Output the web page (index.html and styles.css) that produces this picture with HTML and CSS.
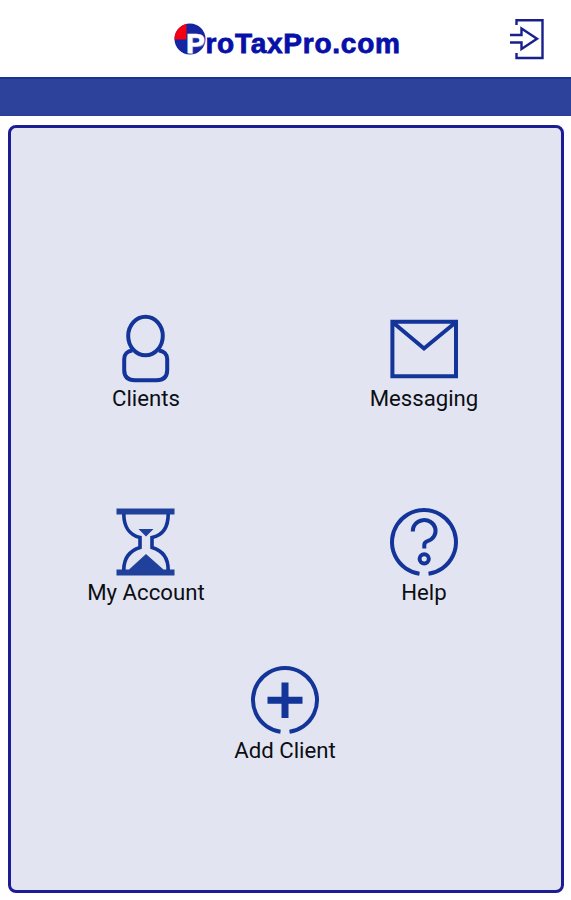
FILE: index.html
```html
<!DOCTYPE html>
<html lang="en">
<head>
<meta charset="utf-8">
<title>ProTaxPro.com</title>
<link rel="stylesheet" href="styles.css">
</head>
<body>
<header class="header">
  <div class="logo">
    <svg class="logo-mark" viewBox="0 0 32 32"><circle cx="16" cy="16" r="15.5" fill="#1524a0"/><path d="M12.5 16.5H.5A15.5 15.5 0 0 1 12.5 .9Z" fill="#f40012"/></svg>
    <span class="logo-text"><span class="logo-initial">P</span>roTaxPro.com</span>
  </div>
  <a class="exit" aria-label="Log out"><svg viewBox="0 0 36 42"><path d="M7.5 7V2.2H33.5V40H7.5V35" /><path d="M1 17H12.5V10.5L28 20.7L12.5 31V24.5H1"/></svg></a>
</header>
<div class="bar"></div>
<main class="panel">
  <a class="item">
    <svg class="icon" viewBox="0 0 72 72"><ellipse cx="35.5" cy="24" rx="17.3" ry="19.2"/><path d="M22.3 38.5C17.5 39 14.2 42.5 14.2 47V58C14.2 65 18 68.2 25 68.2H46.5C53.5 68.2 57.2 65 57.2 58V47C57.2 42.5 54 39 48.7 38.5"/></svg>
    <span class="label">Clients</span>
  </a>
  <a class="item">
    <svg class="icon" viewBox="0 0 72 72"><path d="M4.4 9.8H68V64.2H4.4Z M5 10.5L36 36.5L67.5 10.5"/></svg>
    <span class="label">Messaging</span>
  </a>
  <a class="item">
    <svg class="icon hourglass" viewBox="0 0 72 72"><path class="solid" d="M6.5 2.5H64.5V8.5H6.5ZM6.5 63.5H64.5V69.5H6.5ZM28.5 23H43.5L36 30.5ZM18.5 64L36 48L54 64Z"/><path d="M13.8 8C13.8 20 19 29 30 31.5V41.5C19 45 13.8 53 13.8 64M58.2 8C58.2 20 54 29 42 31.5V41.5C54 45 58.2 53 58.2 64"/></svg>
    <span class="label">My Account</span>
  </a>
  <a class="item">
    <svg class="icon" viewBox="0 0 72 72"><path d="M31.5 67.7A32 32 0 1 1 40.5 67.7"/><path d="M24.8 25.5A11.4 10.8 0 1 1 39.5 35.2C37 36 36.3 37 36.3 39V42.5"/><circle cx="36.2" cy="52.8" r="4.6"/></svg>
    <span class="label">Help</span>
  </a>
  <a class="item add">
    <svg class="icon" viewBox="0 0 72 72"><path d="M31.5 67.7A32 32 0 1 1 40.5 67.7"/><path class="plus" d="M36 18.5V54M18.5 36.2H53.5"/></svg>
    <span class="label">Add Client</span>
  </a>
</main>
</body>
</html>
```
FILE: styles.css
```css
body {
  margin: 0;
  height: 900px;
  background: #fff;
  color: #0c0e14;
  font-family: Roboto, sans-serif;
  overflow: hidden;
}
.header {
  position: relative;
  height: 77px;
  display: flex;
  justify-content: center;
}
.logo {
  position: relative;
  width: 226px;
  margin-left: 3px;
  padding-top: 28px;
  box-sizing: border-box;
}
.logo-mark {
  position: absolute;
  left: 0;
  top: 23px;
  width: 32px;
  height: 32px;
}
.logo-text {
  position: relative;
  display: block;
  margin-left: 12px;
  font: bold 28px/32px "Liberation Sans", sans-serif;
  letter-spacing: 0.75px;
  white-space: nowrap;
  color: #0710a8;
  -webkit-text-stroke: 0.8px #0710a8;
}
.logo-initial {
  color: #fff;
  -webkit-text-stroke: 0.6px #fff;
  text-shadow: 1px 1px 1px #8e96d8;
}
.exit {
  position: absolute;
  right: 26px;
  top: 18px;
  width: 36px;
  height: 42px;
}
.exit svg {
  display: block;
  fill: none;
  stroke: #17208c;
  stroke-width: 2.4;
}
.bar {
  height: 39px;
  box-sizing: border-box;
  background: #2c429b;
  border-top: 2px solid #17348f;
  border-bottom: 1px solid #2a3f93;
}
.panel {
  box-sizing: border-box;
  width: 556px;
  height: 768px;
  margin: 9px 0 0 8px;
  padding-top: 184px;
  border: 3px solid #1c1c95;
  border-radius: 8px;
  background: #e2e5f1;
  display: grid;
  grid-template-columns: 278px 278px;
  grid-template-rows: 194px 158px 110px;
  justify-content: center;
}
.item {
  display: flex;
  flex-direction: column;
  align-items: center;
  margin-left: -2px;
}
.add {
  grid-column: 1 / 3;
}
.icon {
  width: 72px;
  height: 72px;
  fill: none;
  stroke: #13359a;
  stroke-width: 4;
}
.hourglass {
  stroke-width: 3.6;
}
.solid {
  fill: #1f409b;
  stroke: none;
}
.plus {
  stroke-width: 7;
}
.label {
  font-size: 22.2px;
  line-height: 28px;
}
```
